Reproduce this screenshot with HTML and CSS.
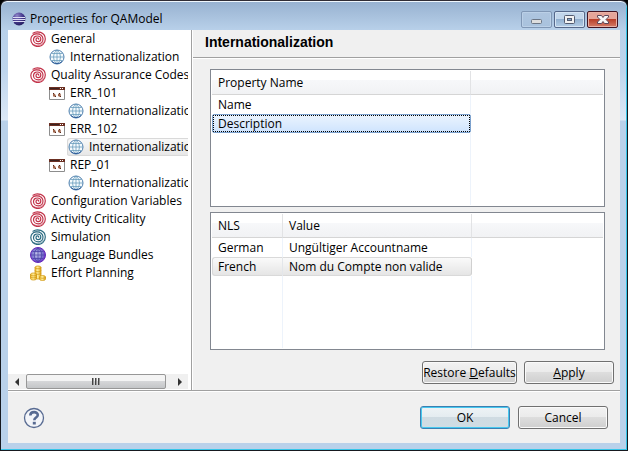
FILE: index.html
```html
<!DOCTYPE html>
<html lang="en">
<head>
<meta charset="utf-8">
<title>Properties for QAModel</title>
<link rel="stylesheet" href="styles.css">
</head>
<body>
<svg class="defs" aria-hidden="true">
  <defs>
    <radialGradient id="orb" cx=".35" cy=".25" r=".8"><stop offset="0" stop-color="#8f86c8"/><stop offset=".5" stop-color="#4a3f93"/><stop offset="1" stop-color="#221a5c"/></radialGradient>
    <linearGradient id="gold" x2="1"><stop offset="0" stop-color="#f0b92c"/><stop offset=".45" stop-color="#fff0a0"/><stop offset="1" stop-color="#e0a010"/></linearGradient>
    <radialGradient id="violet" cx=".45" cy=".45" r=".6"><stop offset="0" stop-color="#c9ccec"/><stop offset=".6" stop-color="#7d78cf"/><stop offset="1" stop-color="#6a22c8"/></radialGradient>
  </defs>
  <symbol id="spiral" viewBox="0 0 16 16">
    <g fill="none" stroke="currentColor" stroke-width="1.2" stroke-linecap="round">
      <path d="M3 2.2C7-.6 15.3 1 15.3 8c0 5-4 7.500-7.500 7.500C4 15.500.8 12.500.8 8.500c0-3.500 2.700-5.700 6-5.700 3.500 0 6.200 2.200 6.200 5.200 0 3-2.200 4.800-4.800 4.800S3.500 11 3.500 8.700C3.500 6.500 5.200 5 7.300 5c2 0 3.500 1.300 3.500 3s-1.200 2.700-2.600 2.700S6 9.800 6 8.600s.8-1.700 1.600-1.700 1.200.6 1.100 1.300"/>
      <path d="M4 13.800c2.500 1.500 8 .8 9.500-2.800M1.800 5C3.500 2.500 7 1.800 9.500 2.300" stroke-width=".6"/>
    </g>
  </symbol>
  <symbol id="globe" viewBox="0 0 16 16">
    <circle cx="8" cy="8" r="7" fill="#f4fafd" stroke="#4f7fae"/>
    <path d="M8 1v14M1 8h14M2.500 4.500h11M2.500 11.500h11M8 1C3.500 4 3.500 12 8 15M8 1c4.500 3 4.500 11 0 14" fill="none" stroke="#6a9dbc" stroke-width=".8"/>
    <path d="M3 12.500a7 7 0 0 0 10 0" fill="none" stroke="#315e9b"/>
  </symbol>
  <symbol id="violet-globe" viewBox="0 0 16 16">
    <circle cx="8" cy="8" r="7.500" fill="url(#violet)" stroke="#6527bb"/>
    <path d="M8 1v14M1 8h14M2.500 4.500h11M2.500 11.500h11M8 1C3 4 3 12 8 15M8 1c5 3 5 11 0 14" fill="none" stroke="#4b43a8" stroke-width=".8"/>
  </symbol>
  <symbol id="form" viewBox="0 0 16 16">
    <path d="M.5 2.500h15v12H.5z" fill="#fff" stroke="#8d8d8d"/>
    <path d="M0 2h16v3H0z" fill="#6b2f22"/>
    <path d="M1 3h9v1H1z" fill="#3a2320"/><path d="M11 3h1v1h-1zM13 3h1v1h-1z" fill="#fff"/>
    <path d="M4 8l2 1 1 2-2 1-1-1zM9 9l2-1 1 2-1 2-2-1z" fill="#a0664c"/>
    <path d="M4 8h1v1H4zM10 8h1v1h-1zM6 11h1v1H6zM11 11h1v1h-1z" fill="#59291a"/>
  </symbol>
  <symbol id="coins" viewBox="0 0 16 16">
    <g fill="url(#gold)" stroke="#d29b18" stroke-width=".8">
      <path d="M5 2.500c0-2 6-2 6 0v10c0 2-6 2-6 0z"/><path d="M5 2.500c0 1.700 6 1.700 6 0M5 5.500c0 1.700 6 1.700 6 0M5 8c0 1.700 6 1.700 6 0" fill="none"/>
      <path d="M.5 9.500c0-2 6-2 6 0v4c0 2-6 2-6 0z"/><path d="M.5 9.500c0 1.700 6 1.700 6 0M.5 11.500c0 1.700 6 1.700 6 0" fill="none"/>
      <path d="M9.500 12c0-2 6-2 6 0v2c0 2-6 2-6 0z"/><path d="M9.500 12c0 1.700 6 1.700 6 0" fill="none"/>
    </g>
  </symbol>
</svg>
<div class="window">
  <header class="titlebar">
    <svg class="logo" viewBox="0 0 14 14" aria-hidden="true"><circle cx="7" cy="7" r="6.500" fill="url(#orb)"/><path d="M1 5.500h12M.5 7.500h13M1 9.500h12" stroke="#dcdcf4" stroke-width="1"/></svg>
    <span class="caption">Properties for QAModel</span>
    <button class="winbtn faded" aria-label="Minimize"><svg viewBox="0 0 29 15"><rect x="9.500" y="7.500" width="10" height="4" rx="1" fill="#dedede" stroke="#6c7685"/></svg></button>
    <button class="winbtn" aria-label="Maximize"><svg viewBox="0 0 29 15"><rect x="9.500" y="3.500" width="10" height="8" rx="1" fill="#f2f2f2" stroke="#525b70"/><rect x="12.500" y="6.500" width="4" height="2" fill="#86a7ca" stroke="#525b70"/></svg></button>
    <button class="winbtn close" aria-label="Close"><svg viewBox="0 0 29 15"><path d="M9.500 3.500h4l1.500 2 1.500-2h4v1.500l-2.500 2.500 2.500 2.500v1.500h-4L15 9.500l-1.500 2h-4V10L12 7.500 9.500 5z" fill="#f7f7f7" stroke="#5c4658"/></svg></button>
  </header>
  <div class="client">
    <div class="main">
      <nav class="side">
        <ul class="tree">
          <li class="red"><svg><use href="#spiral"/></svg><span>General</span></li>
          <li class="l2"><svg><use href="#globe"/></svg><span>Internationalization</span></li>
          <li class="red"><svg><use href="#spiral"/></svg><span>Quality Assurance Codes</span></li>
          <li class="l2"><svg><use href="#form"/></svg><span>ERR_101</span></li>
          <li class="l3"><svg><use href="#globe"/></svg><span>Internationalization</span></li>
          <li class="l2"><svg><use href="#form"/></svg><span>ERR_102</span></li>
          <li class="l3 current"><svg><use href="#globe"/></svg><span>Internationalization</span></li>
          <li class="l2"><svg><use href="#form"/></svg><span>REP_01</span></li>
          <li class="l3"><svg><use href="#globe"/></svg><span>Internationalization</span></li>
          <li class="red"><svg><use href="#spiral"/></svg><span>Configuration Variables</span></li>
          <li class="red"><svg><use href="#spiral"/></svg><span>Activity Criticality</span></li>
          <li class="teal"><svg><use href="#spiral"/></svg><span>Simulation</span></li>
          <li><svg><use href="#violet-globe"/></svg><span>Language Bundles</span></li>
          <li><svg><use href="#coins"/></svg><span>Effort Planning</span></li>
        </ul>
        <div class="scrollbar">
          <button class="arrow" aria-label="Scroll left"><svg viewBox="0 0 4 8"><path d="M4 0v8L0 4z"/></svg></button>
          <div class="thumb"><i></i><i></i><i></i></div>
          <button class="arrow" aria-label="Scroll right"><svg viewBox="0 0 4 8"><path d="M0 0v8l4-4z"/></svg></button>
        </div>
      </nav>
      <section class="page">
        <h1>Internationalization</h1>
        <div class="content">
          <div class="panel">
            <table>
              <colgroup><col class="c-prop"><col></colgroup>
              <thead><tr><th>Property Name</th><th></th></tr></thead>
              <tbody>
                <tr><td>Name</td><td></td></tr>
                <tr class="focused"><td>Description</td><td></td></tr>
                <tr class="rest"><td></td><td></td></tr>
              </tbody>
            </table>
          </div>
          <div class="panel">
            <table class="nls">
              <colgroup><col class="c-nls"><col class="c-value"><col></colgroup>
              <thead><tr><th>NLS</th><th>Value</th><th></th></tr></thead>
              <tbody>
                <tr><td>German</td><td>Ungültiger Accountname</td><td></td></tr>
                <tr class="picked"><td>French</td><td>Nom du Compte non valide</td><td></td></tr>
                <tr class="rest"><td></td><td></td><td></td></tr>
              </tbody>
            </table>
          </div>
        </div>
        <div class="actions">
          <button class="btn wide">Restore <u>D</u>efaults</button>
          <button class="btn"><u>A</u>pply</button>
        </div>
      </section>
    </div>
    <footer class="footer">
      <button class="help" aria-label="Help"><svg viewBox="0 0 22 22"><circle cx="11" cy="11" r="9.500" fill="#f3f5f9" stroke="#586b92" stroke-width="1.300"/><path d="M7.300 8.600c0-4.500 7.500-4.500 7.500-.6 0 2.600-3.500 2.400-3.500 5.200" fill="none" stroke="#586b92" stroke-width="2.600"/><path d="M9.800 14.800h3v2.700h-3z" fill="#586b92"/></svg></button>
      <button class="btn default">OK</button>
      <button class="btn">Cancel</button>
    </footer>
  </div>
</div>
</body>
</html>
```
FILE: styles.css
```css
* { box-sizing: border-box; }
body {
  margin: 0;
  background: #000;
  font: 12px/18px "Open Sans", "Noto Sans", sans-serif;
  color: #000;
}
button { font: inherit; color: inherit; padding: 0; border: 0; background: none; }
.defs { position: absolute; width: 0; height: 0; }

.window {
  height: 100vh;
  display: flex;
  flex-direction: column;
  padding: 0 7px 7px;
  border: 1px solid #16191f;
  border-top-color: #302c35;
  border-radius: 7px 7px 0 0;
  background: linear-gradient(#97b1d0, #b9d1ea 30px, #bed5ed 70px, #dce8f6 119px, #b9d1ea 120px);
  box-shadow: inset 0 1px #f0f7fd, inset -1px -1px #35c5e8;
}

.titlebar { display: flex; align-items: center; height: 29px; padding: 8px 2px 1px 4px; flex: none; }
.logo { width: 14px; height: 14px; margin-right: 4px; }
.caption { flex: 1; }
.winbtn {
  width: 31px;
  height: 17px;
  margin-left: 2px;
  border: 1px solid #56688a;
  border-radius: 2px;
  background: linear-gradient(#c2d6eb 48%, #92b0d0 50%, #b4cde6);
  box-shadow: inset 0 0 0 1px #d5e4f3;
}
.winbtn svg { display: block; width: 29px; height: 15px; }
.winbtn.faded { border-color: #8097b5; background: linear-gradient(#aec5df, #a9c2dd); box-shadow: inset 0 0 0 1px #bbd0e7; }
.winbtn.close { border-color: #431422; background: linear-gradient(#e5a599 48%, #b9402a 50%, #d47c68); box-shadow: inset 0 0 0 1px #e8b1a6; }

.client { flex: 1; min-height: 0; display: flex; flex-direction: column; background: #f0f0f0; }
.main { flex: 1; min-height: 0; display: flex; border-bottom: 1px solid #a0a0a0; box-shadow: 0 1px #fff; }

.side { width: 184px; flex: none; display: flex; flex-direction: column; padding-right: 3px; border-right: 1px solid #a0a0a0; background: #fff; }
.tree { flex: 1; min-height: 0; overflow: hidden; margin: 0; padding: 0; list-style: none; }
.tree li { display: flex; align-items: center; height: 18px; margin-left: 21px; padding-left: 1px; white-space: nowrap; overflow: hidden; }
.tree svg { width: 16px; height: 16px; margin-right: 5px; flex: none; }
.tree .l2 { margin-left: 40px; }
.tree .l3 { margin-left: 59px; }
.tree .red { color: #c23249; }
.tree .teal { color: #2b6a80; }
.tree span { color: #000; }
.tree .current { background: linear-gradient(#fafafa, #e6e6e6); box-shadow: inset 1px 1px #d9d9d9, inset 0 -1px #d9d9d9; border-radius: 3px 0 0 3px; }

.scrollbar { display: flex; height: 15px; margin-bottom: 1px; background: #f0f0f0; }
.arrow { width: 17px; flex: none; display: grid; place-items: center; }
.arrow svg { width: 4px; height: 8px; fill: #333; }
.thumb {
  flex: 0 1 140px;
  margin: 0 auto 0 1px;
  display: flex;
  justify-content: center;
  align-items: center;
  gap: 1px;
  border: 1px solid #979797;
  border-radius: 2px;
  background: linear-gradient(#f4f4f4 48%, #d5d6d8 50%, #c4c6c8);
}
.thumb i { width: 2px; height: 7px; border-left: 1px solid #444; border-right: 1px solid #999; }

.page { flex: 1; min-width: 0; display: flex; flex-direction: column; border-left: 1px solid #fff; }
h1 {
  margin: 0;
  height: 28px;
  padding: 2px 12px 0;
  border-bottom: 1px solid #a0a0a0;
  box-shadow: 0 1px #fff;
  font: bold 14px/20px "Liberation Sans", sans-serif;
}
.content { flex: 1; min-height: 0; display: flex; flex-direction: column; gap: 5px; padding: 11px 15px 0 17px; }
.panel { flex: 1 1 0; min-height: 0; padding: 1px; border: 1px solid #828790; background: #fff; }

table { width: 100%; height: 100%; table-layout: fixed; border-collapse: separate; border-spacing: 0; }
.c-prop { width: 259px; }
.c-nls { width: 71px; }
.c-value { width: 189px; }
th, td { padding: 0 6px; text-align: left; font-weight: normal; white-space: nowrap; }
th {
  height: 24px;
  border-bottom: 1px solid #d5d5d5;
  border-right: 1px solid #e2e3e5;
  background: linear-gradient(#fff 9px, #f7f8fa 9px, #f1f2f4);
}
th:last-child { border-right: 0; }
td { height: 19px; line-height: 17px; border-right: 1px solid #edf3fb; }
td:last-child { border-right: 0; }
.focused td:first-child {
  border: 1px solid #7da2ce;
  border-radius: 2px;
  background: linear-gradient(#ebf4fe, #cfe4fe);
  outline: 1px dotted #000;
  outline-offset: -2px;
  line-height: 15px;
  padding-left: 5px;
}
.picked td:not(:last-child) { border-top: 1px solid #d9d9d9; border-bottom: 1px solid #d9d9d9; background: linear-gradient(#fafafa, #e5e5e5); line-height: 15px; }
.picked td:first-child { border-left: 1px solid #d9d9d9; border-right-color: #e3e6ea; border-radius: 3px 0 0 3px; padding-left: 5px; }
.picked td:nth-child(2) { border-right-color: #d0d0d0; border-radius: 0 3px 3px 0; }
.rest td { height: auto; }

.actions { display: flex; justify-content: flex-end; gap: 7px; padding: 11px 6px 6px; }
.btn {
  width: 90px;
  height: 23px;
  border: 1px solid #707070;
  border-radius: 3px;
  background: linear-gradient(#f2f2f2, #ebebeb 48%, #dddddd 50%, #cfcfcf);
  box-shadow: inset 0 0 0 1px #fafafa;
  line-height: 20px;
  white-space: nowrap;
}
.btn.wide { width: 95px; }
.btn.default { border-color: #3c7fb1; background: linear-gradient(#eef3f6, #e4ecf0 48%, #cfdbe2 50%, #d0dde4); box-shadow: inset 0 0 0 1px #46c8ef; }

.footer { display: flex; align-items: center; gap: 8px; height: 52px; padding: 1px 12px 0 15px; flex: none; }
.help { width: 22px; height: 22px; margin-right: auto; }
.help svg { display: block; width: 22px; height: 22px; }
```
